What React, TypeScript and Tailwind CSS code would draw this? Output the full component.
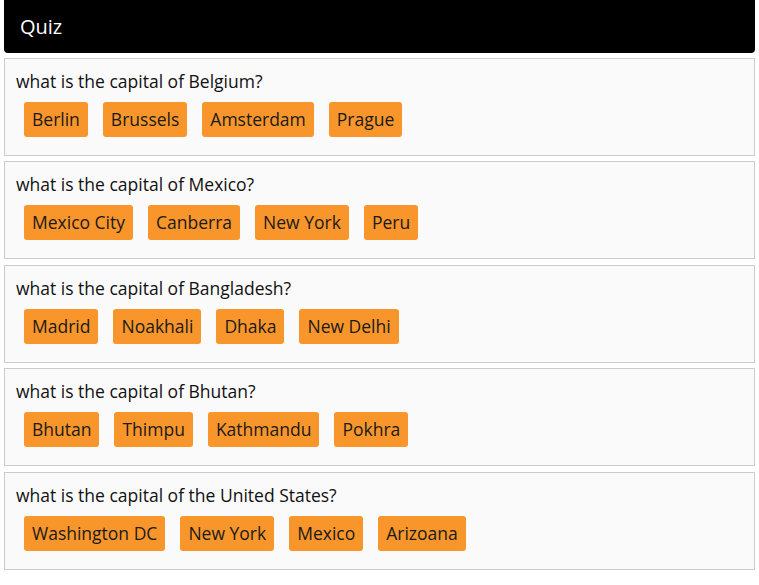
import React from "react";

type Question = { q: string; options: string[] };

const questions: Question[] = [
  { q: "what is the capital of Belgium?", options: ["Berlin", "Brussels", "Amsterdam", "Prague"] },
  { q: "what is the capital of Mexico?", options: ["Mexico City", "Canberra", "New York", "Peru"] },
  { q: "what is the capital of Bangladesh?", options: ["Madrid", "Noakhali", "Dhaka", "New Delhi"] },
  { q: "what is the capital of Bhutan?", options: ["Bhutan", "Thimpu", "Kathmandu", "Pokhra"] },
  { q: "what is the capital of the United States?", options: ["Washington DC", "New York", "Mexico", "Arizoana"] },
];

function QuestionCard({ question, index }: { question: Question; index: number }) {
  // the cards in the shot sit 5-6px apart (half-pixel margins rounded)
  const gap = index > 0 && index % 2 === 0 ? "mt-[6px]" : "mt-[5px]";
  return (
    <div className={`mx-[4px] ${gap} border border-[#cccccc] bg-[#fafafa] px-[11px] pt-[10px] pb-[18px]`}>
      <p className="text-[17.5px] leading-[24px] text-[#111]">{question.q}</p>
      <div className="mt-[9px] ml-[8px] flex gap-[15px]">
        {question.options.map((opt) => (
          <button
            key={opt}
            className="h-[35px] rounded-[3px] bg-[#f8962b] px-[8px] text-[17.5px] leading-[35px] text-[#1a1a1a]"
          >
            {opt}
          </button>
        ))}
      </div>
    </div>
  );
}

export default function App() {
  return (
    <div className="min-h-[585px] bg-white font-['Open_Sans','Lato',sans-serif]">
      <div className="mx-[4px] flex h-[53px] items-center rounded-b-[4px] bg-black px-[16px]">
        <h1 className="text-[20px] text-white">Quiz</h1>
      </div>
      {questions.map((q, i) => (
        <QuestionCard key={q.q} question={q} index={i} />
      ))}
    </div>
  );
}
